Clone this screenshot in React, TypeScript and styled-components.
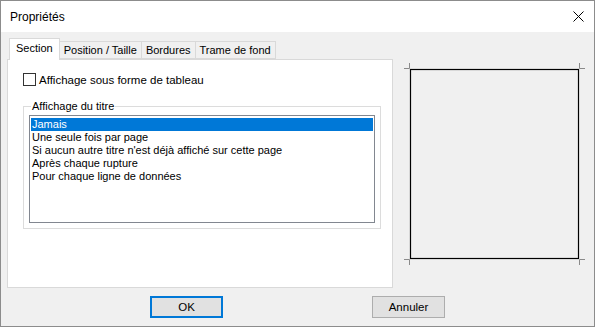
import React from "react";
import styled, { createGlobalStyle } from "styled-components";

const GlobalStyle = createGlobalStyle`
    html, body {
        margin: 0;
        padding: 0;
        background: #ffffff;
    }
    body {
        font-family: "Liberation Sans", Arial, sans-serif;
        font-size: 11px;
        color: #000000;
    }
`;

const Window = styled.div`
    width: 595px;
    height: 327px;
    box-sizing: border-box;
    border: 1px solid #8c8c8c;
    background-color: #f0f0f0;
    display: flex;
    flex-direction: column;
`;

const TitleBar = styled.div`
    height: 31px;
    flex: 0 0 auto;
    background-color: #ffffff;
    display: flex;
    align-items: center;
    justify-content: space-between;
    padding: 0 10px 0 9px;
`;

const Title = styled.span`
    font-size: 12px;
`;

const CloseIcon = styled.svg`
    width: 11px;
    height: 11px;
    display: block;
`;

const Body = styled.div`
    flex: 1;
    display: flex;
    flex-direction: column;
    padding: 6px 0 0 6px;
`;

const MainRow = styled.div`
    display: flex;
    align-items: flex-start;
`;

const TabControl = styled.div`
    width: 386px;
    height: 250px;
    display: flex;
    flex-direction: column;
`;

const TabStrip = styled.div`
    height: 21px;
    display: flex;
    align-items: flex-end;
    padding-left: 2px;
    position: relative;
    z-index: 1;
`;

const Tab = styled.div<{ $active?: boolean }>`
    box-sizing: border-box;
    height: ${p => (p.$active ? "22px" : "18px")};
    margin-bottom: ${p => (p.$active ? "-1px" : "0")};
    margin-left: ${p => (p.$active ? "0" : "-1px")};
    padding: ${p => (p.$active ? "3px 6px 0 6px" : "2px 4px 0 4px")};
    border: 1px solid #d9d9d9;
    border-bottom: ${p => (p.$active ? "none" : "1px solid #d9d9d9")};
    background-color: ${p => (p.$active ? "#ffffff" : "#f0f0f0")};
    font-size: 11px;
    white-space: nowrap;
    &:first-child {
        margin-left: 0;
    }
`;

const Panel = styled.div`
    flex: 1;
    box-sizing: border-box;
    border: 1px solid #d9d9d9;
    background-color: #ffffff;
    padding: 13px 10px 0 15px;
`;

const CheckRow = styled.label`
    display: flex;
    align-items: center;
    gap: 3px;
    height: 13px;
    font-size: 11.5px;
`;

const CheckBox = styled.span`
    width: 13px;
    height: 13px;
    box-sizing: border-box;
    border: 1px solid #333333;
    background: #ffffff;
`;

const GroupBox = styled.fieldset`
    margin: 14px 0 0 0;
    width: 358px;
    box-sizing: border-box;
    border: 1px solid #dcdcdc;
    padding: 0 5px 5px 5px;
`;

const Legend = styled.legend`
    padding: 0 1px;
    margin-left: 2px;
    font-size: 11px;
    line-height: 13px;
`;

const ListBox = styled.ul`
    list-style: none;
    margin: 2px 0 0 0;
    height: 108px;
    box-sizing: border-box;
    border: 1px solid #828790;
    background: #ffffff;
    padding: 2px 1px;
`;

const ListItem = styled.li<{ $selected?: boolean }>`
    height: 13px;
    line-height: 13px;
    padding-left: 1px;
    font-size: 11px;
    white-space: nowrap;
    background-color: ${p => (p.$selected ? "#0078d7" : "transparent")};
    color: ${p => (p.$selected ? "#ffffff" : "#000000")};
`;

const Preview = styled.div`
    margin: 25px 0 0 11px;
    width: 181px;
    height: 202px;
`;

const Footer = styled.div`
    display: flex;
    justify-content: center;
    gap: 149px;
    padding: 8px 6px 0 0;
`;

const Button = styled.button<{ $default?: boolean }>`
    width: 73px;
    height: 22px;
    box-sizing: border-box;
    margin: 0;
    padding: 0;
    font-family: "Liberation Sans", Arial, sans-serif;
    font-size: 11.5px;
    color: #000000;
    background-color: #e1e1e1;
    border: ${p => (p.$default ? "2px solid #0078d7" : "1px solid #adadad")};
`;

const items = [
    "Jamais",
    "Une seule fois par page",
    "Si aucun autre titre n'est déjà affiché sur cette page",
    "Après chaque rupture",
    "Pour chaque ligne de données",
];

const tabs = ["Section", "Position / Taille", "Bordures", "Trame de fond"];

function PageDrawing() {
    // page outline with corner crop marks
    return (
        <svg width="181" height="202" viewBox="0 0 181 202">
            <rect x="6.5" y="6.5" width="168" height="189" fill="none" stroke="#000" strokeWidth="1.2" />
            <g stroke="#8a8a8a" strokeWidth="1" fill="none">
                <path d="M0 5.5H5.5V0" />
                <path d="M175.5 0V5.5H181" />
                <path d="M0 196.5H5.5V202" />
                <path d="M175.5 202V196.5H181" />
            </g>
        </svg>
    );
}

function App() {
    return (
        <>
            <GlobalStyle />
            <Window>
                <TitleBar>
                    <Title>Propriétés</Title>
                    <CloseIcon viewBox="0 0 11 11">
                        <path d="M0.5 0.5L10.5 10.5M10.5 0.5L0.5 10.5" stroke="#000" strokeWidth="1" />
                    </CloseIcon>
                </TitleBar>
                <Body>
                    <MainRow>
                        <TabControl>
                            <TabStrip>
                                {tabs.map((t, i) => (
                                    <Tab key={t} $active={i === 0}>{t}</Tab>
                                ))}
                            </TabStrip>
                            <Panel>
                                <CheckRow>
                                    <CheckBox />
                                    Affichage sous forme de tableau
                                </CheckRow>
                                <GroupBox>
                                    <Legend>Affichage du titre</Legend>
                                    <ListBox>
                                        {items.map((it, i) => (
                                            <ListItem key={it} $selected={i === 0}>{it}</ListItem>
                                        ))}
                                    </ListBox>
                                </GroupBox>
                            </Panel>
                        </TabControl>
                        <Preview>
                            <PageDrawing />
                        </Preview>
                    </MainRow>
                    <Footer>
                        <Button $default>OK</Button>
                        <Button>Annuler</Button>
                    </Footer>
                </Body>
            </Window>
        </>
    );
}

export default App;
